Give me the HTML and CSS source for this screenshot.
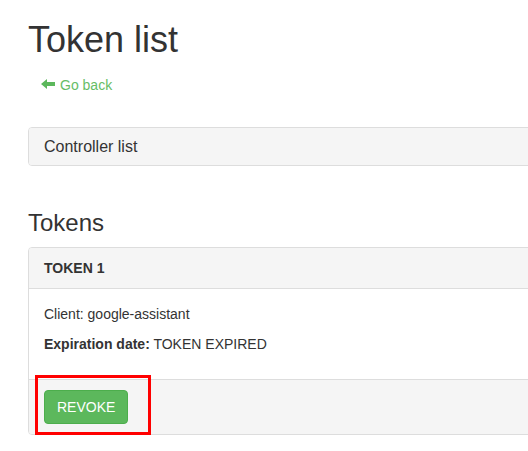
FILE: index.html
```html
<!DOCTYPE html>
<html lang="en">
<head>
<meta charset="utf-8">
<title>Token list</title>
<link rel="stylesheet" href="styles.css">
</head>
<body>
<div class="page">
  <h1 class="title">Token list</h1>
  <div class="back-row">
    <a class="back" href="#"><svg class="back-icon" width="14" height="10" viewBox="0 0 14 10" aria-hidden="true"><path d="M0 5 L6 0 V3 H14 V7 H6 V10 Z" fill="#5cb85c"/></svg>Go back</a>
  </div>
  <div class="panel controller">
    <div class="panel-heading"><h3 class="panel-title">Controller list</h3></div>
  </div>
  <h2 class="section-title">Tokens</h2>
  <div class="panel token">
    <div class="panel-heading token-heading">TOKEN 1</div>
    <div class="panel-body">
      <p>Client: google-assistant</p>
      <p><strong>Expiration date:</strong> TOKEN EXPIRED</p>
    </div>
    <div class="panel-footer">
      <button class="btn-revoke" type="button">REVOKE</button>
      <span class="highlight"></span>
    </div>
  </div>
</div>
</body>
</html>
```

FILE: styles.css
```css
html, body {
  overflow: hidden;
}
body {
  margin: 0;
  font-family: "Liberation Sans", Arial, sans-serif;
  font-size: 14px;
  line-height: 1.42857;
  color: #333;
  background: #fff;
}
.page {
  padding-left: 28px;
  width: 800px;
}
.title {
  margin: 20px 0 10px;
  font-size: 36px;
  font-weight: 500;
  line-height: 1.1;
}
.back-row {
  display: flex;
  margin-top: -2px;
}
.back {
  display: flex;
  align-items: center;
  gap: 5px;
  padding: 6px 12px;
  border: 1px solid transparent;
  line-height: 20px;
  color: #66bd66;
  text-decoration: none;
}
.back-icon {
  display: block;
  margin-top: -1px;
}
.panel {
  background: #fff;
  border: 1px solid #ddd;
  border-radius: 4px;
}
.controller {
  margin-top: 25px;
}
.panel-heading {
  padding: 10px 15px;
  background: #f5f5f5;
  border-top-left-radius: 3px;
  border-top-right-radius: 3px;
}
.controller .panel-heading {
  border-radius: 3px;
}
.panel-title {
  margin: 0;
  font-size: 16px;
  font-weight: 500;
  line-height: 1.1;
}
.section-title {
  margin: 44px 0 10px;
  font-size: 24px;
  font-weight: 500;
  line-height: 1.1;
}
.token-heading {
  border-bottom: 1px solid #ddd;
  font-weight: bold;
  line-height: 20px;
}
.panel-body {
  padding: 15px;
}
.panel-body p {
  margin: 0 0 10px;
  line-height: 20px;
}
.panel-footer {
  position: relative;
  display: flex;
  padding: 10px 15px;
  background: #f5f5f5;
  border-top: 1px solid #ddd;
  border-bottom-left-radius: 3px;
  border-bottom-right-radius: 3px;
}
.btn-revoke {
  padding: 6px 12px;
  font-family: inherit;
  font-size: 14px;
  line-height: 20px;
  color: #fff;
  background: #5cb85c;
  border: 1px solid #4cae4c;
  border-radius: 4px;
}
.highlight {
  position: absolute;
  left: 6px;
  top: -5px;
  width: 116px;
  height: 60px;
  box-sizing: border-box;
  border: 3px solid #ff0000;
}
```
